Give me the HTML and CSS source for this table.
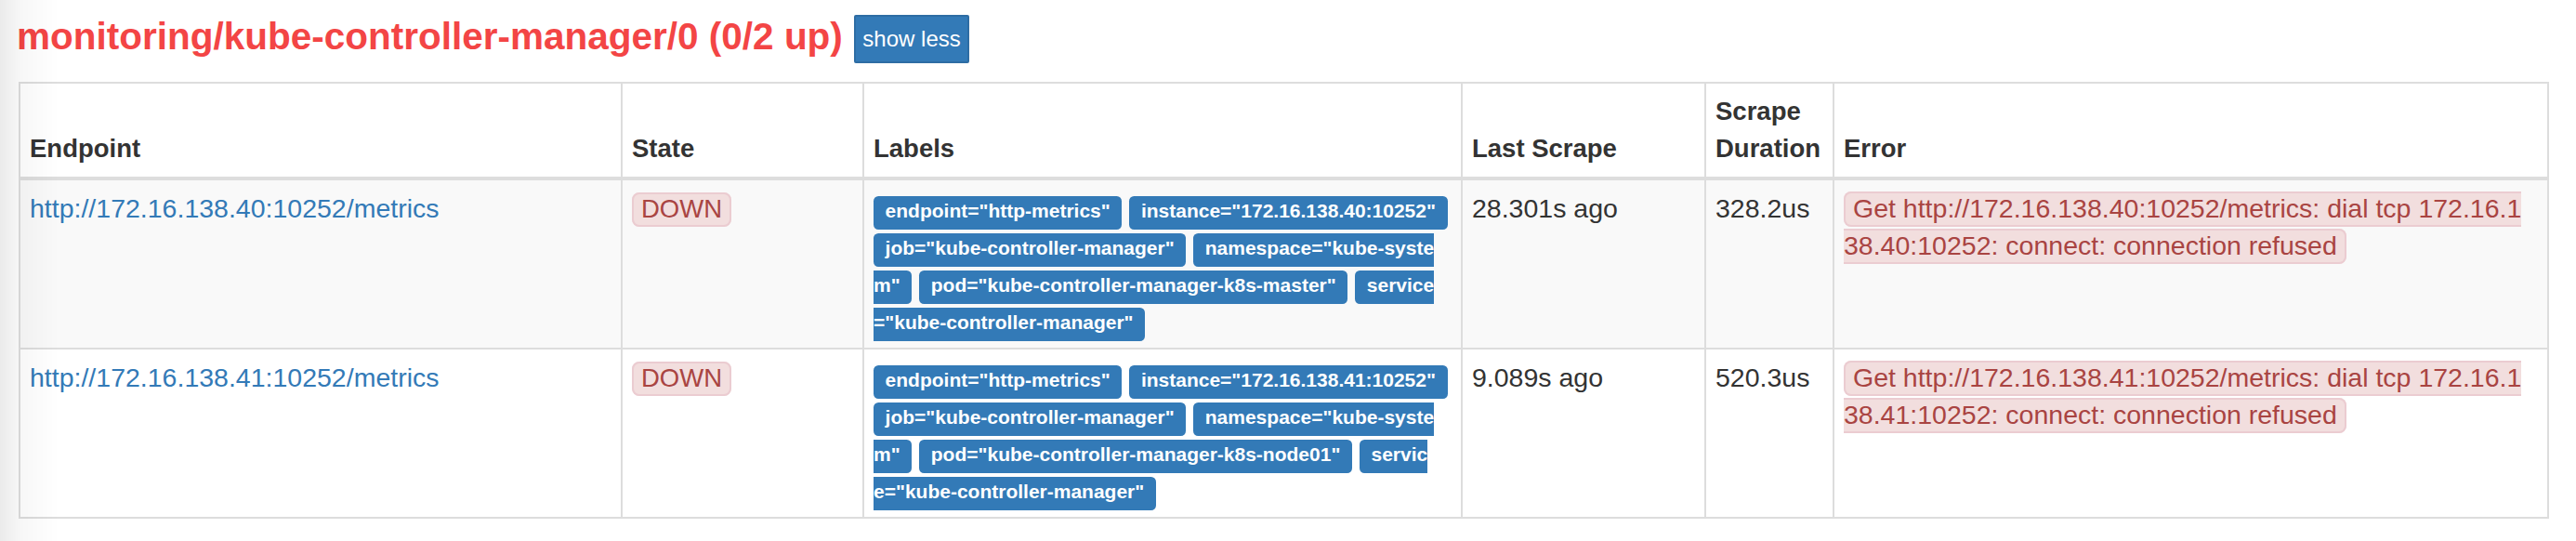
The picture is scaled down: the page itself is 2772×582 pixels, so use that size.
FILE: index.html
```html
<!DOCTYPE html>
<html lang="en">
<head>
<meta charset="utf-8">
<title>Targets</title>
<link rel="stylesheet" href="styles.css">
</head>
<body>
<div class="page">
  <h2 class="job-title">
    <a class="job-header" href="#job-monitoring/kube-controller-manager/0">monitoring/kube-controller-manager/0 (0/2 up)</a>
    <button class="btn-toggle" type="button">show less</button>
  </h2>
  <table class="targets">
    <colgroup>
      <col class="c-endpoint"><col class="c-state"><col class="c-labels"><col class="c-last"><col class="c-dur"><col class="c-error">
    </colgroup>
    <thead>
      <tr>
        <th>Endpoint</th>
        <th>State</th>
        <th>Labels</th>
        <th>Last Scrape</th>
        <th>Scrape Duration</th>
        <th>Error</th>
      </tr>
    </thead>
    <tbody>
      <tr class="odd">
        <td><a class="endpoint" href="#">http://172.16.138.40:10252/metrics</a></td>
        <td><span class="state-indicator state-down">DOWN</span></td>
        <td class="labels"><span class="label">endpoint="http-metrics"</span> <span class="label">instance="172.16.138.40:10252"</span><br>
<span class="label">job="kube-controller-manager"</span> <span class="label">namespace="kube-syste<br>m"</span> <span class="label">pod="kube-controller-manager-k8s-master"</span> <span class="label">service<br>="kube-controller-manager"</span></td>
        <td>28.301s ago</td>
        <td>328.2us</td>
        <td class="error"><span class="state-indicator">Get http://172.16.138.40:10252/metrics: dial tcp 172.16.1<br>38.40:10252: connect: connection refused</span></td>
      </tr>
      <tr>
        <td><a class="endpoint" href="#">http://172.16.138.41:10252/metrics</a></td>
        <td><span class="state-indicator state-down">DOWN</span></td>
        <td class="labels"><span class="label">endpoint="http-metrics"</span> <span class="label">instance="172.16.138.41:10252"</span><br>
<span class="label">job="kube-controller-manager"</span> <span class="label">namespace="kube-syste<br>m"</span> <span class="label">pod="kube-controller-manager-k8s-node01"</span> <span class="label">servic<br>e="kube-controller-manager"</span></td>
        <td>9.089s ago</td>
        <td>520.3us</td>
        <td class="error"><span class="state-indicator">Get http://172.16.138.41:10252/metrics: dial tcp 172.16.1<br>38.41:10252: connect: connection refused</span></td>
      </tr>
    </tbody>
  </table>
</div>
</body>
</html>
```

FILE: styles.css
```css
html, body {
  margin: 0;
  padding: 0;
  background: #fff;
}

body {
  font-family: "Liberation Sans", Arial, Helvetica, sans-serif;
  color: #333;
}

/* soft shadow at the left edge of the window */
body::before {
  content: "";
  position: fixed;
  left: 0;
  top: 0;
  bottom: 0;
  width: 64px;
  background: linear-gradient(to right, rgba(0, 0, 0, 0.08), rgba(0, 0, 0, 0.03) 22px, rgba(0, 0, 0, 0) 64px);
  pointer-events: none;
  z-index: 5;
}

.page {
  padding: 0 0 0 20px;
}

.job-title {
  display: flex;
  align-items: flex-start;
  gap: 12px;
  margin: 17px 0 20px -2px;
  font-size: 40.5px;
  line-height: 44px;
  font-weight: bold;
}

.job-header {
  color: #f34545;
  text-decoration: none;
}

.btn-toggle {
  margin-top: -1px;
  font-family: "Liberation Sans", Arial, Helvetica, sans-serif;
  font-size: 24px;
  line-height: 36px;
  padding: 6px 7.5px;
  color: #fff;
  background: #337ab7;
  border: 2px solid #2e6da4;
  border-radius: 2px;
  cursor: pointer;
}

.targets {
  border-collapse: collapse;
  table-layout: fixed;
  width: 2723px;
  border: 2px solid #ddd;
  font-size: 28.5px;
  line-height: 40px;
  color: #333;
}

.c-endpoint { width: 648px; }
.c-state { width: 260px; }
.c-labels { width: 644px; }
.c-last { width: 262px; }
.c-dur { width: 138px; }
.c-error { width: 769px; }

.targets th,
.targets td {
  border: 2px solid #ddd;
  padding: 10px;
  text-align: left;
  vertical-align: top;
}

.targets th {
  vertical-align: bottom;
  border-bottom: 4px solid #ddd;
  font-size: 27.5px;
  font-weight: bold;
  color: #333;
}

.targets tbody tr.odd td {
  background: #f9f9f9;
}

.endpoint {
  color: #337ab7;
  text-decoration: none;
}

.state-indicator {
  padding: 0 8px 1.5px;
  color: #a94442;
  background: #f2dede;
  border: 2px solid #ebccd1;
  border-radius: 8px;
}

.state-down {
  font-size: 27.5px;
}

.labels,
.error {
  white-space: nowrap;
}

.label {
  font-size: 21px;
  line-height: 1;
  font-weight: bold;
  color: #fff;
  background: #337ab7;
  padding: 4px 12.6px 8.5px;
  border-radius: 5.25px;
}
```
